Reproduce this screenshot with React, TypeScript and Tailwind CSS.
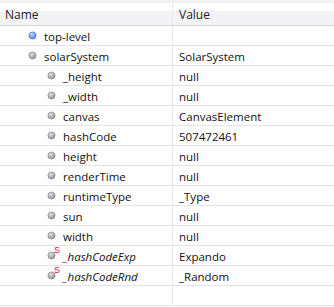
import React from "react";

type Row = { name: string; value: string; level: 0 | 1; kind: "blue" | "gray" | "static" };

const rows: Row[] = [
  { name: "top-level", value: "", level: 0, kind: "blue" },
  { name: "solarSystem", value: "SolarSystem", level: 0, kind: "gray" },
  { name: "_height", value: "null", level: 1, kind: "gray" },
  { name: "_width", value: "null", level: 1, kind: "gray" },
  { name: "canvas", value: "CanvasElement", level: 1, kind: "gray" },
  { name: "hashCode", value: "507472461", level: 1, kind: "gray" },
  { name: "height", value: "null", level: 1, kind: "gray" },
  { name: "renderTime", value: "null", level: 1, kind: "gray" },
  { name: "runtimeType", value: "_Type", level: 1, kind: "gray" },
  { name: "sun", value: "null", level: 1, kind: "gray" },
  { name: "width", value: "null", level: 1, kind: "gray" },
  { name: "_hashCodeExp", value: "Expando", level: 1, kind: "static" },
  { name: "_hashCodeRnd", value: "_Random", level: 1, kind: "static" },
];

function Dot({ blue }: { blue: boolean }) {
  return (
    <svg width="9" height="9" viewBox="0 0 9 9" className="shrink-0">
      <defs>
        <radialGradient id={blue ? "gb" : "gg"} cx="40%" cy="35%" r="65%">
          <stop offset="0%" stopColor={blue ? "#c9dcff" : "#e2e2e2"} />
          <stop offset="100%" stopColor={blue ? "#4a7fe0" : "#8e8e8e"} />
        </radialGradient>
      </defs>
      <circle cx="4.5" cy="4.5" r="3.6" fill={`url(#${blue ? "gb" : "gg"})`} stroke={blue ? "#5b86cf" : "#9a9a9a"} strokeWidth="0.8" />
    </svg>
  );
}

export default function App() {
  return (
    <div
      className="w-[334px] h-[307px] bg-white overflow-hidden text-[11.5px] text-[#111]"
      style={{ fontFamily: '"Open Sans", "Noto Sans", sans-serif' }}
    >
      <div className="h-[3px] bg-[#f0f0f0]" />
      <div className="flex h-[23px] border-b border-[#d5d5d5] bg-[linear-gradient(#ffffff_0%,#ffffff_36%,#f3f3f5_38%,#f3f3f5_100%)]">
        <div className="w-[173px] border-r border-[#e8e8e8] pl-[5px] pt-[2px] flex items-center text-[12px] text-[#1e1e1e]">Name</div>
        <div className="flex-1 pl-[6px] pt-[2px] flex items-center text-[12px] text-[#1e1e1e]">Value</div>
      </div>
      {[...rows, null].map((r, i) => (
        <div key={i} className="flex h-[20px] border-b border-[#e3e3e3]">
          <div className="w-[173px] border-r border-[#e8e8e8] flex items-center pt-[2px]">
            {r && (
              <div className={`flex items-center ${r.level === 0 ? "pl-[28px]" : "pl-[47px]"}`}>
                <div className="relative w-[9px] h-[9px] mr-[7px] mt-[-2px]">
                  <Dot blue={r.kind === "blue"} />
                  {r.kind === "static" && (
                    <span className="absolute left-[7px] top-[-5px] text-[9px] leading-none text-[#d0103a]" style={{ fontFamily: '"Liberation Sans", sans-serif' }}>
                      S
                    </span>
                  )}
                </div>
                <span className={r.kind === "static" ? "italic" : ""}>{r.name}</span>
              </div>
            )}
          </div>
          <div className="flex-1 pl-[6px] pt-[2px] flex items-center">{r ? r.value : ""}</div>
        </div>
      ))}
    </div>
  );
}
